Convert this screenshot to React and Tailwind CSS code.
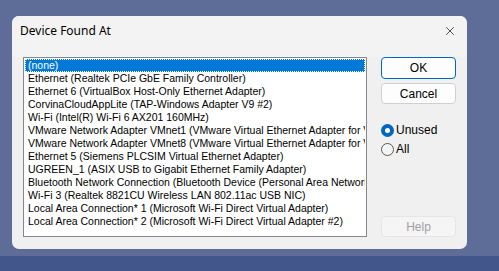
import { X } from 'lucide-react';

const devices = [
  '(none)',
  'Ethernet (Realtek PCIe GbE Family Controller)',
  'Ethernet 6 (VirtualBox Host-Only Ethernet Adapter)',
  'CorvinaCloudAppLite (TAP-Windows Adapter V9 #2)',
  'Wi-Fi (Intel(R) Wi-Fi 6 AX201 160MHz)',
  'VMware Network Adapter VMnet1 (VMware Virtual Ethernet Adapter for VMnet1)',
  'VMware Network Adapter VMnet8 (VMware Virtual Ethernet Adapter for VMnet8)',
  'Ethernet 5 (Siemens PLCSIM Virtual Ethernet Adapter)',
  'UGREEN_1 (ASIX USB to Gigabit Ethernet Family Adapter)',
  'Bluetooth Network Connection (Bluetooth Device (Personal Area Network))',
  'Wi-Fi 3 (Realtek 8821CU Wireless LAN 802.11ac USB NIC)',
  'Local Area Connection* 1 (Microsoft Wi-Fi Direct Virtual Adapter)',
  'Local Area Connection* 2 (Microsoft Wi-Fi Direct Virtual Adapter #2)',
];

function Radio({ checked, label }) {
  return (
    <div className="flex items-center gap-[2px] h-[16px]">
      {checked ? (
        <span className="shrink-0 w-[13px] h-[13px] rounded-full bg-[#0067c0] flex items-center justify-center">
          <span className="w-[5px] h-[5px] rounded-full bg-white" />
        </span>
      ) : (
        <span className="shrink-0 w-[13px] h-[13px] rounded-full border border-[#5a5a5a] bg-[#f5f5f5]" />
      )}
      <span className="text-[12px] leading-[14px] text-black">{label}</span>
    </div>
  );
}

export default function App() {
  return (
    <div className="w-[499px] h-[271px] bg-[#5e6c98] flex flex-col overflow-hidden" style={{ fontFamily: '"Liberation Sans", Arial, sans-serif' }}>
      <div className="h-[256px] pt-[16px] pl-[12px]">
        <div className="w-[455px] h-[233px] rounded-[7px] bg-[#f0f0f0] overflow-hidden flex flex-col">
          <div className="h-[41px] bg-[#f3f3f3] flex items-start justify-between pl-[8px] pr-[10px] pt-[7px]">
            <span className="text-[12px] leading-[16px] text-black" style={{ fontFamily: '"Noto Sans", "Liberation Sans", sans-serif' }}>Device Found At</span>
            <X className="mt-[1px] w-[14px] h-[14px] text-[#1a1a1a]" strokeWidth={1.3} />
          </div>
          <div className="flex pl-[11px]">
            <div className="w-[344px] h-[180px] border border-[#828790] bg-white p-[1px] overflow-hidden">
              {devices.map((d, i) => (
                <div
                  key={d}
                  className={`h-[13px] leading-[13px] pl-[3px] text-[10.5px] whitespace-nowrap overflow-hidden ${
                    i === 0 ? 'bg-[#0078d7] text-white outline outline-1 outline-dotted outline-[#ffffff] -outline-offset-1' : 'text-black'
                  }`}
                >
                  {d}
                </div>
              ))}
            </div>
            <div className="ml-[14px] w-[75px] flex flex-col">
              <button className="h-[22px] rounded-[4px] border border-[#0067c0] bg-[#fdfdfd] text-[12px] text-black">OK</button>
              <button className="mt-[4px] h-[21px] rounded-[4px] border border-[#d0d0d0] bg-[#fdfdfd] text-[12px] text-black">Cancel</button>
              <div className="mt-[18px] flex flex-col gap-[3px]">
                <Radio checked label="Unused" />
                <Radio label="All" />
              </div>
              <div className="flex-1" />
              <button className="h-[21px] rounded-[4px] border border-[#e5e5e5] bg-[#f5f5f5] text-[12px] text-[#a0a0a0]">Help</button>
            </div>
          </div>
        </div>
      </div>
      <div className="flex-1 bg-[#42568c]" />
    </div>
  );
}
